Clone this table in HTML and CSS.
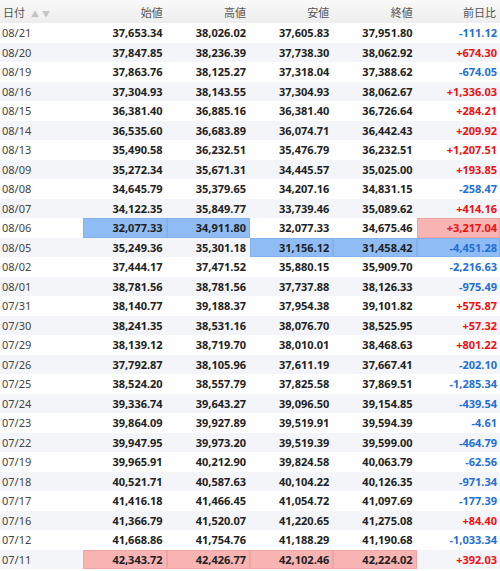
FILE: index.html
```html
<!DOCTYPE html>
<html lang="ja">
<head>
    <meta charset="UTF-8">
    <title>日経平均 時系列</title>
    <link rel="stylesheet" href="styles.css">
</head>
<body>
    <table class="prices">
        <thead>
            <tr>
                <th class="date-col">日付 <span class="sort">▲</span><span class="sort">▼</span></th>
                <th>始値</th>
                <th>高値</th>
                <th>安値</th>
                <th>終値</th>
                <th>前日比</th>
            </tr>
        </thead>
        <tbody>
            <tr><td class="date">08/21</td><td>37,653.34</td><td>38,026.02</td><td>37,605.83</td><td>37,951.80</td><td class="down">-111.12</td></tr>
            <tr><td class="date">08/20</td><td>37,847.85</td><td>38,236.39</td><td>37,738.30</td><td>38,062.92</td><td class="up">+674.30</td></tr>
            <tr><td class="date">08/19</td><td>37,863.76</td><td>38,125.27</td><td>37,318.04</td><td>37,388.62</td><td class="down">-674.05</td></tr>
            <tr><td class="date">08/16</td><td>37,304.93</td><td>38,143.55</td><td>37,304.93</td><td>38,062.67</td><td class="up">+1,336.03</td></tr>
            <tr><td class="date">08/15</td><td>36,381.40</td><td>36,885.16</td><td>36,381.40</td><td>36,726.64</td><td class="up">+284.21</td></tr>
            <tr><td class="date">08/14</td><td>36,535.60</td><td>36,683.89</td><td>36,074.71</td><td>36,442.43</td><td class="up">+209.92</td></tr>
            <tr><td class="date">08/13</td><td>35,490.58</td><td>36,232.51</td><td>35,476.79</td><td>36,232.51</td><td class="up">+1,207.51</td></tr>
            <tr><td class="date">08/09</td><td>35,272.34</td><td>35,671.31</td><td>34,445.57</td><td>35,025.00</td><td class="up">+193.85</td></tr>
            <tr><td class="date">08/08</td><td>34,645.79</td><td>35,379.65</td><td>34,207.16</td><td>34,831.15</td><td class="down">-258.47</td></tr>
            <tr><td class="date">08/07</td><td>34,122.35</td><td>35,849.77</td><td>33,739.46</td><td>35,089.62</td><td class="up">+414.16</td></tr>
            <tr><td class="date">08/06</td><td class="hi-blue">32,077.33</td><td class="hi-blue">34,911.80</td><td>32,077.33</td><td>34,675.46</td><td class="up hi-red">+3,217.04</td></tr>
            <tr><td class="date">08/05</td><td>35,249.36</td><td>35,301.18</td><td class="hi-blue">31,156.12</td><td class="hi-blue">31,458.42</td><td class="down hi-blue">-4,451.28</td></tr>
            <tr><td class="date">08/02</td><td>37,444.17</td><td>37,471.52</td><td>35,880.15</td><td>35,909.70</td><td class="down">-2,216.63</td></tr>
            <tr><td class="date">08/01</td><td>38,781.56</td><td>38,781.56</td><td>37,737.88</td><td>38,126.33</td><td class="down">-975.49</td></tr>
            <tr><td class="date">07/31</td><td>38,140.77</td><td>39,188.37</td><td>37,954.38</td><td>39,101.82</td><td class="up">+575.87</td></tr>
            <tr><td class="date">07/30</td><td>38,241.35</td><td>38,531.16</td><td>38,076.70</td><td>38,525.95</td><td class="up">+57.32</td></tr>
            <tr><td class="date">07/29</td><td>38,139.12</td><td>38,719.70</td><td>38,010.01</td><td>38,468.63</td><td class="up">+801.22</td></tr>
            <tr><td class="date">07/26</td><td>37,792.87</td><td>38,105.96</td><td>37,611.19</td><td>37,667.41</td><td class="down">-202.10</td></tr>
            <tr><td class="date">07/25</td><td>38,524.20</td><td>38,557.79</td><td>37,825.58</td><td>37,869.51</td><td class="down">-1,285.34</td></tr>
            <tr><td class="date">07/24</td><td>39,336.74</td><td>39,643.27</td><td>39,096.50</td><td>39,154.85</td><td class="down">-439.54</td></tr>
            <tr><td class="date">07/23</td><td>39,864.09</td><td>39,927.89</td><td>39,519.91</td><td>39,594.39</td><td class="down">-4.61</td></tr>
            <tr><td class="date">07/22</td><td>39,947.95</td><td>39,973.20</td><td>39,519.39</td><td>39,599.00</td><td class="down">-464.79</td></tr>
            <tr><td class="date">07/19</td><td>39,965.91</td><td>40,212.90</td><td>39,824.58</td><td>40,063.79</td><td class="down">-62.56</td></tr>
            <tr><td class="date">07/18</td><td>40,521.71</td><td>40,587.63</td><td>40,104.22</td><td>40,126.35</td><td class="down">-971.34</td></tr>
            <tr><td class="date">07/17</td><td>41,416.18</td><td>41,466.45</td><td>41,054.72</td><td>41,097.69</td><td class="down">-177.39</td></tr>
            <tr><td class="date">07/16</td><td>41,366.79</td><td>41,520.07</td><td>41,220.65</td><td>41,275.08</td><td class="up">+84.40</td></tr>
            <tr><td class="date">07/12</td><td>41,668.86</td><td>41,754.76</td><td>41,188.29</td><td>41,190.68</td><td class="down">-1,033.34</td></tr>
            <tr><td class="date">07/11</td><td class="hi-red">42,343.72</td><td class="hi-red">42,426.77</td><td class="hi-red">42,102.46</td><td class="hi-red">42,224.02</td><td class="up">+392.03</td></tr>
        </tbody>
    </table>
</body>
</html>
```

FILE: styles.css
```css
body {
    margin: 0;
    background-color: #fff;
    font-family: "Noto Sans", "Noto Sans CJK JP", sans-serif;
}
.prices {
    width: 500px;
    table-layout: fixed;
    border-collapse: collapse;
    font-size: 11px;
}
.prices th {
    height: 23px;
    padding: 0 4px 0 0;
    text-align: right;
    font-weight: normal;
    font-size: 11px;
    color: #555;
    background: linear-gradient(#f9f9f9, #ededed);
}
.prices th.date-col {
    text-align: left;
    padding-left: 3px;
}
.sort {
    color: #c4c4c4;
    font-size: 8px;
    margin-left: 3px;
}
.prices td {
    height: 19.5px;
    padding: 0 4px 0 0;
    text-align: right;
    font-weight: bold;
    color: #222;
    line-height: 1;
}
.prices tbody tr:nth-child(even) td {
    background-color: #f4f5f8;
}
.prices td.date {
    text-align: left;
    padding-left: 2px;
    font-weight: normal;
    color: #444;
}
.prices td:last-child {
    padding-right: 3px;
}
.up {
    color: #f01010 !important;
}
.down {
    color: #1f6fd6 !important;
}
.prices tbody tr td.hi-blue {
    background-color: #8fbcf5;
    box-shadow: inset 0 0 0 1px rgba(60, 100, 160, 0.12);
}
.prices tbody tr td.hi-red {
    background-color: #f8b3b3;
    box-shadow: inset 0 0 0 1px rgba(160, 60, 60, 0.12);
}
```
